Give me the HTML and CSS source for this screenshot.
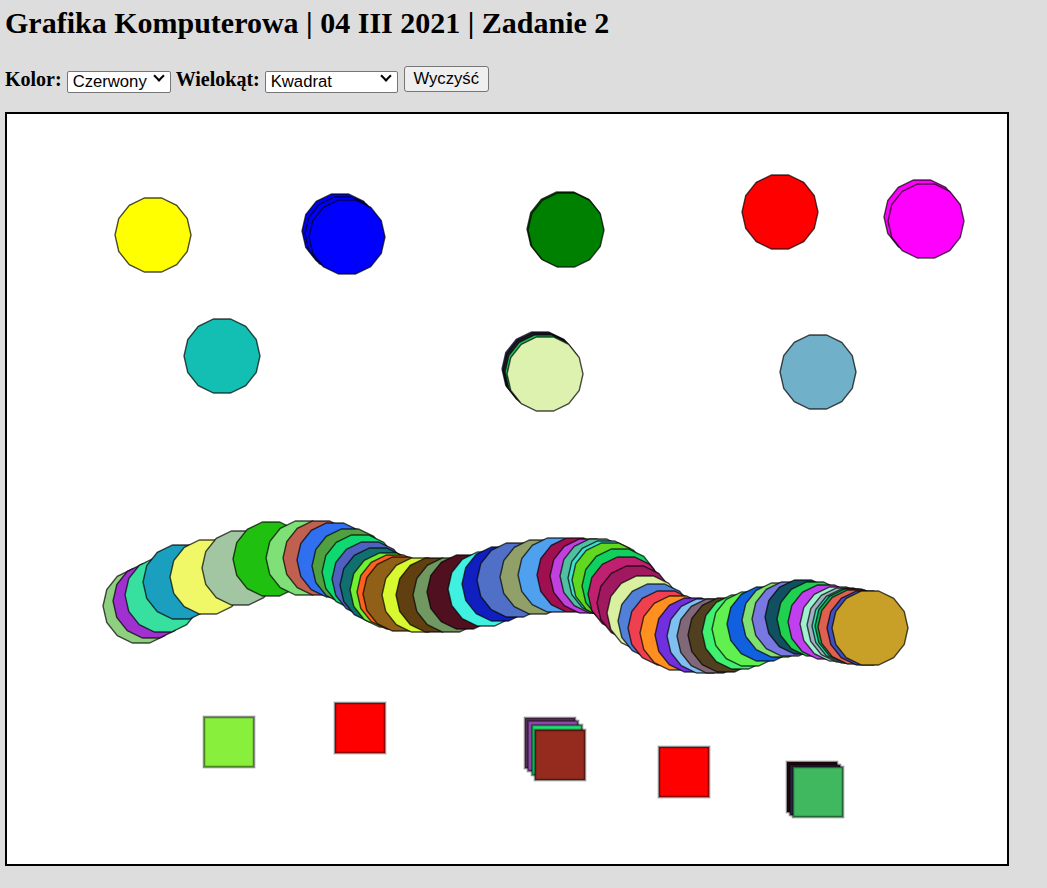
FILE: index.html
```html
<!DOCTYPE html>
<html lang="pl">
<head>
<meta charset="utf-8">
<title>Grafika Komputerowa | Zadanie 2</title>
<link rel="stylesheet" href="styles.css">
</head>
<body>
<h1 class="title">Grafika Komputerowa | 04 III 2021 | Zadanie 2</h1>
<div class="controls">
<label class="lbl">Kolor:</label> <span class="sel-wrap sel-color"><select class="sel"><option>Czerwony</option></select></span> <label class="lbl">Wielokąt:</label> <span class="sel-wrap sel-poly"><select class="sel"><option>Kwadrat</option></select></span> <button class="btn">Wyczyść</button>
</div>
<canvas id="board" class="board" width="1000" height="750"></canvas>
<script src="script.js"></script>
</body>
</html>
```

FILE: styles.css
```css
html { background: #dddddd; }
body {
  margin: 0;
  padding: 5px;
  background: #dddddd;
  font-family: "Liberation Serif", "Times New Roman", serif;
  color: #000;
}
.title {
  margin: 0 0 25px 0;
  font-size: 30px;
  font-weight: bold;
  line-height: 36px;
}
.controls {
  font-size: 20px;
  line-height: 26px;
  height: 26px;
}
.lbl { font-weight: bold; }
.sel-wrap {
  position: relative;
  display: inline-block;
  vertical-align: top;
  margin-top: 1px;
}
.sel {
  -webkit-appearance: none;
  appearance: none;
  box-sizing: border-box;
  height: 22px;
  border: 1px solid #767676;
  border-radius: 2px;
  background: #fff;
  font-family: "Liberation Sans", Arial, sans-serif;
  font-size: 16.67px;
  color: #000;
  padding: 0 0 0 5px;
  margin: 0;
}
.sel-color .sel { width: 104px; }
.sel-poly .sel { width: 133px; }
.sel-wrap::after {
  content: "";
  position: absolute;
  right: 8px;
  top: 5px;
  width: 6px;
  height: 6px;
  border-right: 2px solid #000;
  border-bottom: 2px solid #000;
  transform: rotate(45deg);
  pointer-events: none;
}
.btn {
  box-sizing: border-box;
  vertical-align: top;
  height: 26px;
  width: 85px;
  border: 1px solid #767676;
  border-radius: 3px;
  background: #efefef;
  font-family: "Liberation Sans", Arial, sans-serif;
  font-size: 16.67px;
  color: #000;
  padding: 0;
  margin: 0 0 0 1px;
}
.board {
  display: block;
  margin-top: 20px;
  border: 2px solid #000;
  background: #fff;
  width: 1000px;
  height: 750px;
}
```

FILE: script.js
```js
var cv = document.getElementById('board');
var ctx = cv.getContext('2d');
var OX = 7, OY = 114, R = 38, N = 14;

function poly(x, y, c) {
  x -= OX; y -= OY;
  ctx.beginPath();
  for (var i = 0; i < N; i++) {
    var a = i * 2 * Math.PI / N;
    var px = x + R * Math.cos(a), py = y + R * Math.sin(a);
    if (i === 0) ctx.moveTo(px, py); else ctx.lineTo(px, py);
  }
  ctx.closePath();
  ctx.fillStyle = c;
  ctx.fill();
  ctx.lineWidth = 1.4;
  ctx.strokeStyle = 'rgba(0,0,0,0.7)';
  ctx.stroke();
}
function sq(x, y, c) {
  x -= OX; y -= OY;
  ctx.fillStyle = c;
  ctx.fillRect(x - 25, y - 25, 50, 50);
  ctx.lineWidth = 2.5;
  ctx.strokeStyle = 'rgba(0,0,0,0.45)';
  ctx.strokeRect(x - 25, y - 25, 50, 50);
}

var circles = [
  [153, 235, '#ffff00'],
  [340, 231, '#0000ff'], [343, 234, '#0000ff'], [347, 237, '#0000ff'],
  [565, 229, '#008000'], [566, 230, '#008000'],
  [780, 212, '#ff0000'],
  [922, 217, '#ff00ff'], [926, 221, '#ff00ff'],
  [222, 356, '#13bfb3'],
  [540, 369, '#6040c0'], [541, 370, '#202020'], [543, 372, '#20c060'], [545, 374, '#def2b0'],
  [818, 372, '#70b0c8'],
  [141, 606, '#8fd080'], [151, 601, '#a030d0'], [163, 595, '#38e0a0'], [181, 582, '#1a9fbf'],
  [208, 577, '#f0f868'], [240, 568, '#a2c6a2'], [271, 559, '#20c010'], [304, 558, '#80e078'],
  [321, 558, '#c06050'], [335, 560, '#3070f0'], [350, 566, '#50a040'], [360, 572, '#10d870'],
  [370, 579, '#5060c0'], [378, 585, '#107070'], [388, 590, '#70f030'], [395, 592, '#ff6020'],
  [401, 594, '#906018'], [420, 595, '#d8f830'], [434, 595, '#604010'], [451, 595, '#709860'],
  [465, 592, '#501020'], [486, 589, '#40f0e0'], [500, 584, '#1020c0'], [515, 580, '#5070c8'],
  [538, 577, '#90a068'], [556, 575, '#50a0f0'], [575, 575, '#a01050'], [588, 576, '#c040e0'],
  [598, 576, '#50c0a0'], [606, 578, '#40e0d0'], [610, 580, '#60d820'], [620, 586, '#10d060'],
  [626, 594, '#c02070'], [635, 603, '#a01860'], [645, 613, '#d8f0a0'], [656, 621, '#5080d8'],
  [666, 628, '#f04050'], [678, 633, '#ff9020'], [693, 635, '#7030e0'], [705, 636, '#80c0f0'],
  [715, 636, '#806878'], [726, 635, '#504020'], [740, 632, '#40f070'], [750, 629, '#60f050'],
  [765, 624, '#1060e0'], [780, 620, '#80e070'], [790, 619, '#7878e0'], [803, 617, '#105060'],
  [815, 619, '#20d050'], [826, 622, '#c040f0'], [838, 624, '#a0f0d0'], [845, 625, '#a0b0c0'],
  [850, 626, '#30e0b0'], [853, 626, '#10b050'], [856, 627, '#e06050'], [865, 628, '#4050c0'],
  [870, 628, '#c8a028']
];
circles.forEach(function (c) { poly(c[0], c[1], c[2]); });

var squares = [
  [229, 742, '#88f03c'],
  [360, 728, '#ff0000'],
  [550, 743, '#6a3a6a'], [553, 746, '#a050c0'], [557, 750, '#20e070'], [560, 755, '#952a1e'],
  [684, 772, '#ff0000'],
  [812, 787, '#2a0a10'], [815, 790, '#303050'], [818, 792, '#40b860']
];
squares.forEach(function (s) { sq(s[0], s[1], s[2]); });
```
